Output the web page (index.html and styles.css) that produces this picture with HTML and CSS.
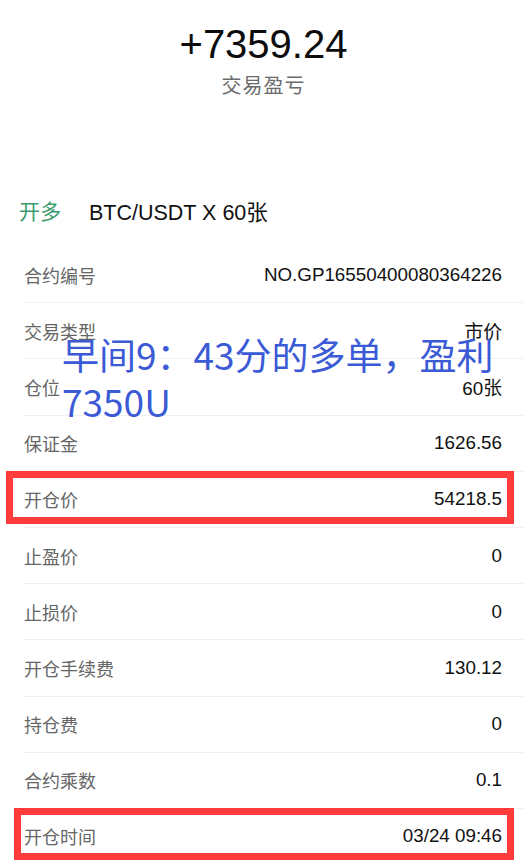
FILE: index.html
```html
<!DOCTYPE html>
<html lang="zh-CN">
<head>
<meta charset="utf-8">
<title>交易详情</title>
<link rel="stylesheet" href="styles.css">
</head>
<body>
<div class="page">
  <div class="header">
    <div class="pnl">+7359.24</div>
    <div class="pnl-label">交易盈亏</div>
  </div>
  <div class="title-row">
    <span class="side">开多</span>
    <span class="pair">BTC/USDT X 60张</span>
  </div>
  <div class="list">
    <div class="row"><span class="label">合约编号</span><span class="value">NO.GP16550400080364226</span></div>
    <div class="row"><span class="label">交易类型</span><span class="value">市价</span></div>
    <div class="row"><span class="label">仓位</span><span class="value">60张</span></div>
    <div class="row"><span class="label">保证金</span><span class="value">1626.56</span></div>
    <div class="row"><span class="label">开仓价</span><span class="value">54218.5</span></div>
    <div class="row"><span class="label">止盈价</span><span class="value">0</span></div>
    <div class="row"><span class="label">止损价</span><span class="value">0</span></div>
    <div class="row"><span class="label">开仓手续费</span><span class="value">130.12</span></div>
    <div class="row"><span class="label">持仓费</span><span class="value">0</span></div>
    <div class="row"><span class="label">合约乘数</span><span class="value">0.1</span></div>
    <div class="row"><span class="label">开仓时间</span><span class="value">03/24 09:46</span></div>
  </div>
  <div class="note">早间9：43分的多单，盈利<br>7350U</div>
  <div class="mark mark-price"></div>
  <div class="mark mark-time"></div>
</div>
</body>
</html>
```

FILE: styles.css
```css
html, body {
  margin: 0;
  padding: 0;
  background: #ffffff;
}
.page {
  position: relative;
  width: 523px;
  height: 864px;
  overflow: hidden;
  font-family: "Liberation Sans", "Noto Sans CJK SC", sans-serif;
  color: #111111;
}
.header {
  display: flex;
  flex-direction: column;
  align-items: center;
  padding-top: 20px;
  padding-left: 4px;
  height: 162px;
  box-sizing: border-box;
}
.pnl {
  font-size: 40px;
  line-height: 48px;
  color: #0c0c0c;
}
.pnl-label {
  margin-top: 4px;
  font-size: 20px;
  line-height: 28px;
  color: #6b6b6b;
  letter-spacing: 1px;
}
.title-row {
  display: flex;
  align-items: center;
  height: 56px;
  padding-left: 19px;
  margin-top: 20px;
}
.side {
  font-size: 21px;
  color: #3a9a6c;
  margin-right: 28px;
}
.pair {
  font-size: 21.5px;
  color: #111111;
}
.list {
  margin-top: 9px;
}
.row {
  display: flex;
  justify-content: space-between;
  align-items: center;
  height: 55.2px;
  margin-left: 24px;
  padding-right: 21px;
  border-bottom: 1px solid #f0f0f0;
}
.label {
  font-size: 18px;
  color: #666666;
}
.value {
  font-size: 18.8px;
  color: #111111;
}
.note {
  position: absolute;
  left: 62px;
  top: 331px;
  font-family: "Noto Sans CJK SC", sans-serif;
  font-size: 37px;
  line-height: 47px;
  color: #3a5ad6;
  white-space: nowrap;
}
.mark {
  position: absolute;
  border: 7px solid #ff3b3b;
  box-sizing: border-box;
}
.mark-price {
  left: 6px;
  top: 471px;
  width: 508px;
  height: 53px;
}
.mark-time {
  left: 14px;
  top: 808px;
  width: 500px;
  height: 52px;
}
```
